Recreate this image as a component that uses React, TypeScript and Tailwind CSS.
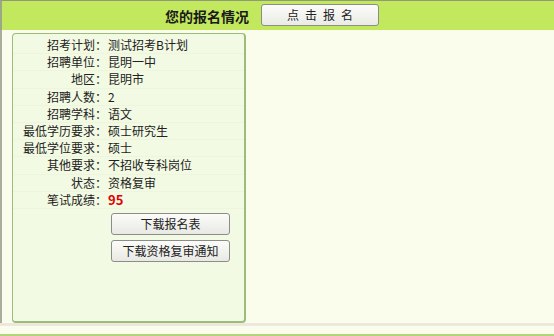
import React from "react";

const rows: { label: string; value: string; red?: boolean }[] = [
  { label: "招考计划：", value: "测试招考B计划" },
  { label: "招聘单位：", value: "昆明一中" },
  { label: "地区：", value: "昆明市" },
  { label: "招聘人数：", value: "2" },
  { label: "招聘学科：", value: "语文" },
  { label: "最低学历要求：", value: "硕士研究生" },
  { label: "最低学位要求：", value: "硕士" },
  { label: "其他要求：", value: "不招收专科岗位" },
  { label: "状态：", value: "资格复审" },
  { label: "笔试成绩：", value: "95", red: true },
];

const font = { fontFamily: '"Noto Sans CJK SC", "Liberation Sans", sans-serif' };

export default function App() {
  return (
    <div
      className="w-[554px] h-[336px] overflow-hidden bg-[#fafcec] text-[12px] text-[#222] flex flex-col"
      style={font}
    >
      {/* header bar */}
      <div className="h-[30px] shrink-0 bg-[#c2e85e] border-t border-[#8f9a7a] border-l-2 border-l-[#9aa888] flex items-center pl-[163px]">
        <span className="text-[14px] font-bold text-[#1a1a1a] leading-none">您的报名情况</span>
        <button className="ml-[12px] -mt-[2px] w-[118px] h-[22px] rounded-[3px] border border-[#8c8c8c] bg-gradient-to-b from-[#fbfbf8] to-[#ebebe6] text-[12px] tracking-[6px] pl-[6px] text-[#222] leading-none">
          点击报名
        </button>
      </div>

      {/* content */}
      <div className="flex-1 flex border-l-2 border-[#a8ad9c]">
        <div className="ml-[10px] mt-[3px] w-[234px] h-[290px] rounded-[4px] border border-[#9dbb7a] border-r-2 border-b-2 bg-[#f3fae3] pt-[3px]">
          {rows.map((r) => (
            <div key={r.label} className="flex h-[17.2px] items-center border-b border-[#eef5dd]">
              <div className="w-[94px] text-right leading-none">{r.label}</div>
              <div className={`pl-[1px] leading-none ${r.red ? "text-[#e00000] font-bold text-[13px]" : ""}`}>
                {r.value}
              </div>
            </div>
          ))}
          <div className="flex flex-col gap-[5px] pl-[98px] mt-[4px]">
            {["下载报名表", "下载资格复审通知"].map((t) => (
              <button
                key={t}
                className="w-[119px] h-[22px] rounded-[3px] border border-[#8c8c8c] bg-gradient-to-b from-[#fbfbf8] to-[#e9e9e4] text-[12px] text-[#222] leading-none"
              >
                {t}
              </button>
            ))}
          </div>
        </div>
      </div>

      {/* footer lines */}
      <div className="h-[3px] shrink-0 bg-[#ece9dc]" />
      <div className="h-[8px] shrink-0 bg-[#fafcec]" />
      <div className="h-[2px] shrink-0 bg-[#b4d47c]" />
    </div>
  );
}
